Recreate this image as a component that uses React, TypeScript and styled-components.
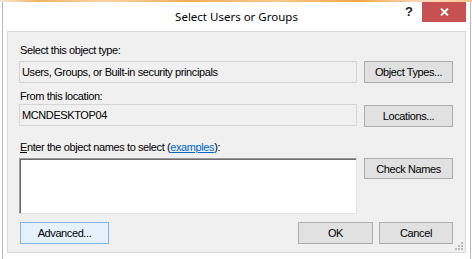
import styled, { createGlobalStyle } from "styled-components";

const GlobalStyle = createGlobalStyle`
  html, body {
    margin: 0;
    padding: 0;
    background: #ffffff;
    overflow: hidden;
  }
  body {
    font-family: "Liberation Sans", Arial, sans-serif;
    font-size: 11px;
    letter-spacing: -0.4px;
    color: #000;
  }
`;

const Desktop = styled.div`
  width: 472px;
  height: 259px;
  overflow: hidden;
  display: flex;
  flex-direction: column;
  background: #ffffff;
`;

// bit of the desktop showing above the window
const DesktopStrip = styled.div`
  height: 2px;
  flex: none;
  background: linear-gradient(
    90deg,
    #f7e6d6 0%,
    #f2b462 8%,
    #f8d3a6 22%,
    #f1ad55 40%,
    #f7c88c 58%,
    #f3a845 76%,
    #f9dcc0 90%,
    #f4c690 100%
  );
`;

const Window = styled.div`
  margin-left: 2px;
  width: 469px;
  flex: 1;
  box-sizing: border-box;
  border-left: 1px solid #b9b9b9;
  border-right: 1px solid #b9b9b9;
  padding: 0 4px;
  background: #ffffff;
  display: flex;
  flex-direction: column;
`;

const TitleBar = styled.div`
  height: 29px;
  flex: none;
  display: grid;
  grid-template-columns: 1fr auto 1fr;
  align-items: start;
`;

const Title = styled.div`
  grid-column: 2;
  align-self: center;
  font-family: "Noto Sans", "Open Sans", sans-serif;
  font-size: 11.5px;
  letter-spacing: 0;
  color: #000;
  white-space: nowrap;
  padding-bottom: 1px;
`;

const Controls = styled.div`
  grid-column: 3;
  justify-self: end;
  display: flex;
  align-items: center;
  gap: 9px;
`;

const HelpGlyph = styled.span`
  font-family: "Liberation Sans", Arial, sans-serif;
  font-weight: bold;
  font-size: 13px;
  letter-spacing: 0;
  line-height: 20px;
  color: #222;
`;

const CloseButton = styled.div`
  width: 44px;
  height: 20px;
  background: #c75050;
  display: flex;
  align-items: center;
  justify-content: center;
`;

const Client = styled.div`
  position: relative;
  box-sizing: border-box;
  height: 222px;
  flex: none;
  border: 1px solid #dadada;
  background: #f0f0f0;
  padding: 11px 12px 9px 11px;
  display: flex;
  flex-direction: column;
`;

const Label = styled.div<{ $top: number }>`
  margin-top: ${(p) => p.$top}px;
  height: 13px;
  line-height: 13px;
  padding-left: 1px;
  white-space: nowrap;
`;

const Row = styled.div<{ $top: number }>`
  margin-top: ${(p) => p.$top}px;
  display: grid;
  grid-template-columns: 338px 89px;
  column-gap: 7px;
  align-items: start;
`;

const ReadOnlyField = styled.div`
  box-sizing: border-box;
  height: 22px;
  border: 1px solid #d4d4d4;
  background: #f0f0f0;
  padding: 0 2px;
  line-height: 20px;
  white-space: nowrap;
`;

const NamesBox = styled.div`
  box-sizing: border-box;
  height: 56px;
  background: #ffffff;
  border: 1px solid;
  border-color: #9a9a9a #e3e3e3 #e3e3e3 #9a9a9a;
  box-shadow: inset 1px 1px 0 #6d6d6d;
`;

const Button = styled.div<{ $width?: number; $height?: number; $hot?: boolean; $offset?: number }>`
  box-sizing: border-box;
  width: ${(p) => p.$width ?? 89}px;
  height: ${(p) => p.$height ?? 22}px;
  margin-top: ${(p) => p.$offset ?? 0}px;
  border: 1px solid ${(p) => (p.$hot ? "#7eb4ea" : "#adadad")};
  background: ${(p) => (p.$hot ? "#e5f1fb" : "#e1e1e1")};
  display: flex;
  align-items: center;
  justify-content: center;
  white-space: nowrap;
`;

const ButtonBar = styled.div`
  margin-top: 8px;
  padding-left: 1px;
  display: flex;
  gap: 6px;
`;

const Spacer = styled.div`
  flex: 1;
`;

const Link = styled.span`
  color: #0066cc;
  text-decoration: underline;
`;

const AccessKey = styled.span`
  text-decoration: underline;
`;

const Gripper = styled.svg`
  position: absolute;
  right: 2px;
  bottom: 2px;
`;

export default function App() {
  return (
    <Desktop>
      <GlobalStyle />
      <DesktopStrip />
      <Window>
        <TitleBar>
          <Title>Select Users or Groups</Title>
          <Controls>
            <HelpGlyph>?</HelpGlyph>
            <CloseButton>
              <svg width="9" height="8" viewBox="0 0 9 8">
                <path d="M1 0.5 L8 7.5 M8 0.5 L1 7.5" stroke="#fff" strokeWidth="1.8" />
              </svg>
            </CloseButton>
          </Controls>
        </TitleBar>

        <Client>
          <Label $top={1}>Select this object type:</Label>
          <Row $top={4}>
            <ReadOnlyField>Users, Groups, or Built-in security principals</ReadOnlyField>
            <Button>Object Types...</Button>
          </Row>

          <Label $top={7}>From this location:</Label>
          <Row $top={1}>
            <ReadOnlyField>MCNDESKTOP04</ReadOnlyField>
            <Button $offset={1}>Locations...</Button>
          </Row>

          <Label $top={14}>
            <AccessKey>E</AccessKey>nter the object names to select (<Link>examples</Link>):
          </Label>
          <Row $top={4}>
            <NamesBox />
            <Button $height={21}>Check Names</Button>
          </Row>

          <ButtonBar>
            <Button $hot>Advanced...</Button>
            <Spacer />
            <Button $width={75}>OK</Button>
            <Button $width={74}>Cancel</Button>
          </ButtonBar>

          {/* size grip */}
          <Gripper width="8" height="8" viewBox="0 0 8 8">
            {[
              [6, 0],
              [3, 3],
              [6, 3],
              [0, 6],
              [3, 6],
              [6, 6],
            ].map(([x, y]) => (
              <rect key={`${x}-${y}`} x={x} y={y} width="2" height="2" fill="#b8b8b8" />
            ))}
          </Gripper>
        </Client>
      </Window>
    </Desktop>
  );
}
